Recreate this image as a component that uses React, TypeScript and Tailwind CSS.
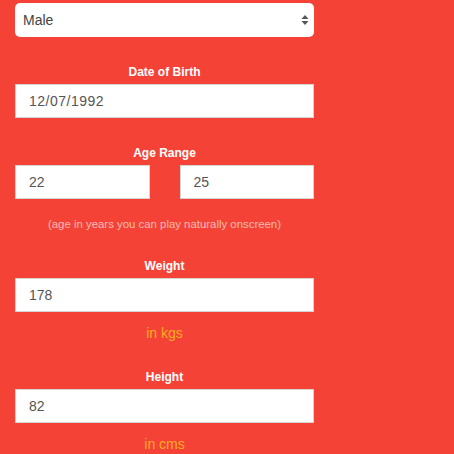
import React from "react";

const font = { fontFamily: '"Liberation Sans", Arial, Helvetica, sans-serif' };

function Label({ children, className = "" }: { children: React.ReactNode; className?: string }) {
  return (
    <div className={`text-center text-[12px] leading-[17px] font-bold text-white ${className}`}>{children}</div>
  );
}

function Field({ value, className = "" }: { value: string; className?: string }) {
  return (
    <div
      className={`h-[34px] bg-white border border-[#d4d4d4] flex items-center pl-[13px] text-[14px] text-[#555] ${className}`}
    >
      {value}
    </div>
  );
}

export default function App() {
  return (
    <div className="w-[454px] h-[454px] bg-[#f44336] overflow-hidden" style={font}>
      <div className="w-[299px] ml-[15px] pt-[3px]">
        <div className="h-[34px] bg-white rounded-[5px] flex items-center justify-between pl-[8px] pr-[5px] text-[14px] text-[#444]">
          <span>Male</span>
          <svg width="8" height="12" viewBox="0 0 8 12">
            <path d="M4 1 L7.5 5 L0.5 5 Z" fill="#555" />
            <path d="M4 11 L7.5 7 L0.5 7 Z" fill="#555" />
          </svg>
        </div>

        <Label className="mt-[27px]">Date of Birth</Label>
        <Field value="12/07/1992" className="mt-[3px] tracking-[0.5px]" />

        <Label className="mt-[27px]">Age Range</Label>
        <div className="mt-[3px] grid grid-cols-2 gap-x-[30px]">
          <Field value="22" />
          <Field value="25" />
        </div>
        <div className="mt-[17px] text-center text-[11.4px] leading-[17px] text-[#fdbcb4]">
          (age in years you can play naturally onscreen)
        </div>

        <Label className="mt-[25px]">Weight</Label>
        <Field value="178" className="mt-[3px]" />
        <div className="mt-[11px] text-center text-[14px] leading-[20px] text-[#ffad1f]">in kgs</div>

        <Label className="mt-[26px]">Height</Label>
        <Field value="82" className="mt-[3px]" />
        <div className="mt-[11px] text-center text-[14px] leading-[20px] text-[#ffad1f]">in cms</div>
      </div>
    </div>
  );
}
